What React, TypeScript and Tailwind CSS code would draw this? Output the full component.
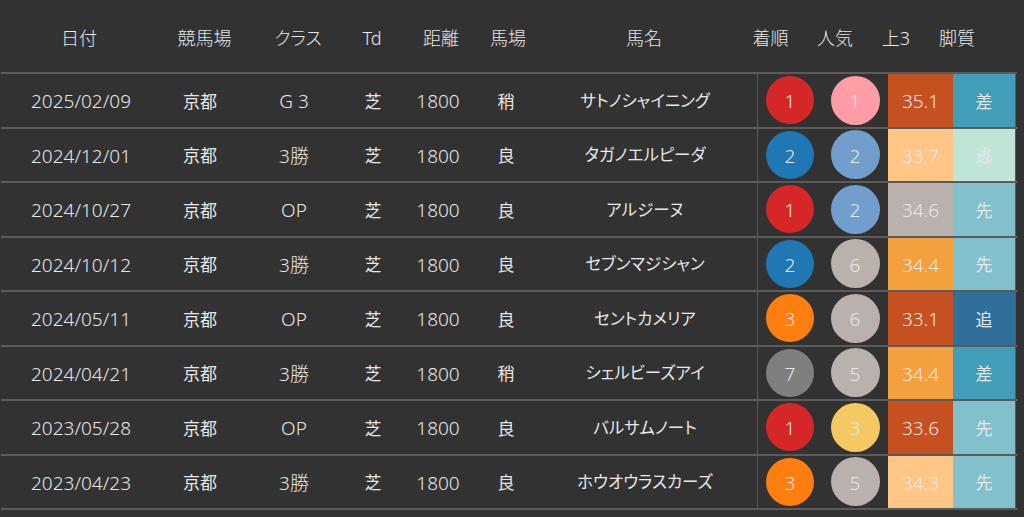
import React from "react";

type Race = {
  date: string;
  venue: string;
  cls: string;
  td: string;
  dist: string;
  baba: string;
  name: string;
  rank: number;
  pop: number;
  agari: string;
  style: string;
};

const races: Race[] = [
  { date: "2025/02/09", venue: "京都", cls: "G 3", td: "芝", dist: "1800", baba: "稍", name: "サトノシャイニング", rank: 1, pop: 1, agari: "35.1", style: "差" },
  { date: "2024/12/01", venue: "京都", cls: "3勝", td: "芝", dist: "1800", baba: "良", name: "タガノエルピーダ", rank: 2, pop: 2, agari: "33.7", style: "逃" },
  { date: "2024/10/27", venue: "京都", cls: "OP", td: "芝", dist: "1800", baba: "良", name: "アルジーヌ", rank: 1, pop: 2, agari: "34.6", style: "先" },
  { date: "2024/10/12", venue: "京都", cls: "3勝", td: "芝", dist: "1800", baba: "良", name: "セブンマジシャン", rank: 2, pop: 6, agari: "34.4", style: "先" },
  { date: "2024/05/11", venue: "京都", cls: "OP", td: "芝", dist: "1800", baba: "良", name: "セントカメリア", rank: 3, pop: 6, agari: "33.1", style: "追" },
  { date: "2024/04/21", venue: "京都", cls: "3勝", td: "芝", dist: "1800", baba: "稍", name: "シェルビーズアイ", rank: 7, pop: 5, agari: "34.4", style: "差" },
  { date: "2023/05/28", venue: "京都", cls: "OP", td: "芝", dist: "1800", baba: "良", name: "バルサムノート", rank: 1, pop: 3, agari: "33.6", style: "先" },
  { date: "2023/04/23", venue: "京都", cls: "3勝", td: "芝", dist: "1800", baba: "良", name: "ホウオウラスカーズ", rank: 3, pop: 5, agari: "34.3", style: "先" },
];

const rankColor: Record<number, string> = {
  1: "bg-[#d62728]",
  2: "bg-[#1f77b4]",
  3: "bg-[#ff7f0e]",
  7: "bg-[#7f7f7f]",
};

const popColor: Record<number, string> = {
  1: "bg-[#ff9da7]",
  2: "bg-[#729ece]",
  3: "bg-[#f4c862]",
  5: "bg-[#bab0ac]",
  6: "bg-[#bab0ac]",
};

const agariColor: Record<string, string> = {
  "35.1": "bg-[#c4511f]",
  "33.7": "bg-[#ffc685]",
  "34.6": "bg-[#bab0ac]",
  "34.4": "bg-[#f5a03e]",
  "33.1": "bg-[#c4511f]",
  "33.6": "bg-[#c4511f]",
  "34.3": "bg-[#ffc685]",
};

const styleColor: Record<string, string> = {
  差: "bg-[#419db8]",
  逃: "bg-[#bfe5d7]",
  先: "bg-[#82c0cc]",
  追: "bg-[#2f6f99]",
};

// header cells are centred on their own x positions, not on the body columns
const headerCols: [string, string][] = [
  ["日付", "w-[158px]"],
  ["競馬場", "w-[93px]"],
  ["クラス", "w-[94px]"],
  ["Td", "w-[54px]"],
  ["距離", "w-[84px]"],
  ["馬場", "w-[50px]"],
  ["馬名", "w-[222px]"],
  ["着順", "w-[31px]"],
  ["人気", "w-[98px]"],
  ["上3", "w-[24px]"],
  ["脚質", "w-[98px]"],
];

function Header() {
  return (
    <div className="flex h-[72px] items-center pt-[4px] text-[18px] font-light">
      {headerCols.map(([label, w]) => (
        <div key={label} className={`${w} flex justify-center whitespace-nowrap`}>
          {label}
        </div>
      ))}
    </div>
  );
}

const cell = "flex items-center justify-center pt-[2px]";
const num = "text-[19px] font-light";

function Row({ r }: { r: Race }) {
  return (
    <div className="flex h-[54.5px] border-b-2 border-[#5b5b5b] w-[1017px]">
      <div className={`w-[160px] ${cell} ${num}`}>{r.date}</div>
      <div className={`w-[78px] ${cell}`}>{r.venue}</div>
      <div className={`w-[110px] ${cell} ${num}`}>{r.cls}</div>
      <div className={`w-[48px] ${cell}`}>{r.td}</div>
      <div className={`w-[82px] ${cell} ${num}`}>{r.dist}</div>
      <div className={`w-[54px] ${cell}`}>{r.baba}</div>
      <div className={`w-[225px] ${cell} text-[16.5px] border-r border-[#5b5b5b]`}>{r.name}</div>
      <div className="w-[64px] flex items-center justify-center">
        <div className={`w-[48px] h-[48px] rounded-full ${cell} ${num} ${rankColor[r.rank]}`}>{r.rank}</div>
      </div>
      <div className="w-[66px] flex items-center justify-center">
        <div className={`w-[49px] h-[49px] rounded-full ${cell} ${num} ${popColor[r.pop]}`}>{r.pop}</div>
      </div>
      <div className={`w-[65px] ${cell} ${num} ${agariColor[r.agari]}`}>{r.agari}</div>
      <div className={`w-[63px] ${cell} border-r border-[#5b5b5b] ${styleColor[r.style]}`}>{r.style}</div>
    </div>
  );
}

export default function App() {
  return (
    <div
      className="w-[1024px] h-[517px] bg-[#323232] text-[#e8e8e8] text-[17px] overflow-hidden [font-feature-settings:'palt']"
      style={{ fontFamily: '"Noto Sans", "Noto Sans CJK JP", sans-serif' }}
    >
      <Header />
      <div className="ml-[1px] border-t-2 border-[#5b5b5b] w-[1016px]">
        {races.map((r) => (
          <Row key={r.date} r={r} />
        ))}
      </div>
    </div>
  );
}
